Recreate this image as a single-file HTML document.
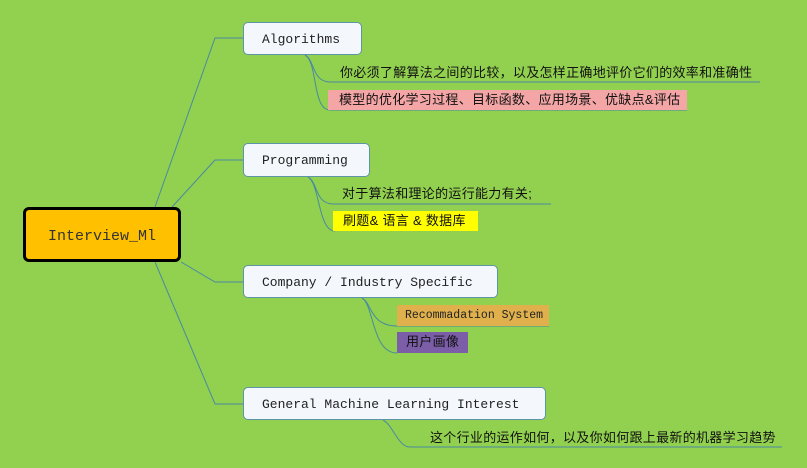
<!DOCTYPE html><html><head><meta charset="utf-8"><style>
body{margin:0;width:807px;height:468px;background:#92d050;position:relative;overflow:hidden;font-family:"Liberation Mono","Noto Sans CJK SC",monospace;}
.a{position:absolute;white-space:nowrap}
.n{background:#f4f8fc;border:1px solid #5d94a8;border-radius:5px;box-sizing:border-box;font-size:13px;color:#222;padding-left:18px;line-height:34px}
.c{font-size:13px;color:#111;font-family:"Liberation Sans","Noto Sans CJK SC",sans-serif;line-height:20px;letter-spacing:0.3px}
</style></head><body>
<svg class="a" style="left:0;top:0" width="807" height="468" fill="none" stroke="#4a8aa0" stroke-width="1">
<path d="M155 207 L215 38 H243"/><path d="M172 207 L215 160 H243"/>
<path d="M181 262 L215 282 H243"/><path d="M155 262 L215 404 H243"/>
<path d="M305 55 C315 60 312 82 330 82 H760"/><path d="M305 55 C318 62 312 110 330 110 H687"/>
<path d="M308 177 C318 182 315 204 333 204 H551"/><path d="M308 177 C320 184 318 231 335 231"/>
<path d="M362 298 C372 303 370 326 397 326 H549"/><path d="M362 298 C374 305 372 353 397 353"/>
<path d="M383 420 C393 425 398 447 410 447 H782"/>
</svg>
<div class="a" style="left:23px;top:207px;width:158px;height:55px;box-sizing:border-box;border:3px solid #000;border-radius:6px;background:#ffc000;font-size:15px;line-height:53px;text-align:center;color:#333">Interview_Ml</div>
<div class="a n" style="left:243px;top:22px;width:119px;height:33px">Algorithms</div>
<div class="a n" style="left:243px;top:143px;width:127px;height:34px">Programming</div>
<div class="a n" style="left:243px;top:265px;width:255px;height:33px">Company / Industry Specific</div>
<div class="a n" style="left:243px;top:387px;width:303px;height:33px">General Machine Learning Interest</div>
<div class="a c" style="left:340px;top:63px">你必须了解算法之间的比较，以及怎样正确地评价它们的效率和准确性</div>
<div class="a c" style="left:328px;top:90px;width:359px;height:20px;background:#f4a6a6;padding-left:11px;box-sizing:border-box">模型的优化学习过程、目标函数、应用场景、优缺点&amp;评估</div>
<div class="a c" style="left:342px;top:184px">对于算法和理论的运行能力有关;</div>
<div class="a c" style="left:333px;top:211px;width:145px;height:20px;background:#ffff00;padding-left:10px;box-sizing:border-box">刷题&amp; 语言 &amp; 数据库</div>
<div class="a" style="left:397px;top:305px;width:152px;height:21px;background:#e0b04c;font-size:11.5px;line-height:22px;padding-left:8px;box-sizing:border-box;color:#222">Recommadation System</div>
<div class="a c" style="left:397px;top:332px;width:71px;height:21px;background:#7b5ea7;padding-left:9px;box-sizing:border-box;color:#111">用户画像</div>
<div class="a c" style="left:430px;top:428px">这个行业的运作如何，以及你如何跟上最新的机器学习趋势</div>
</body></html>
